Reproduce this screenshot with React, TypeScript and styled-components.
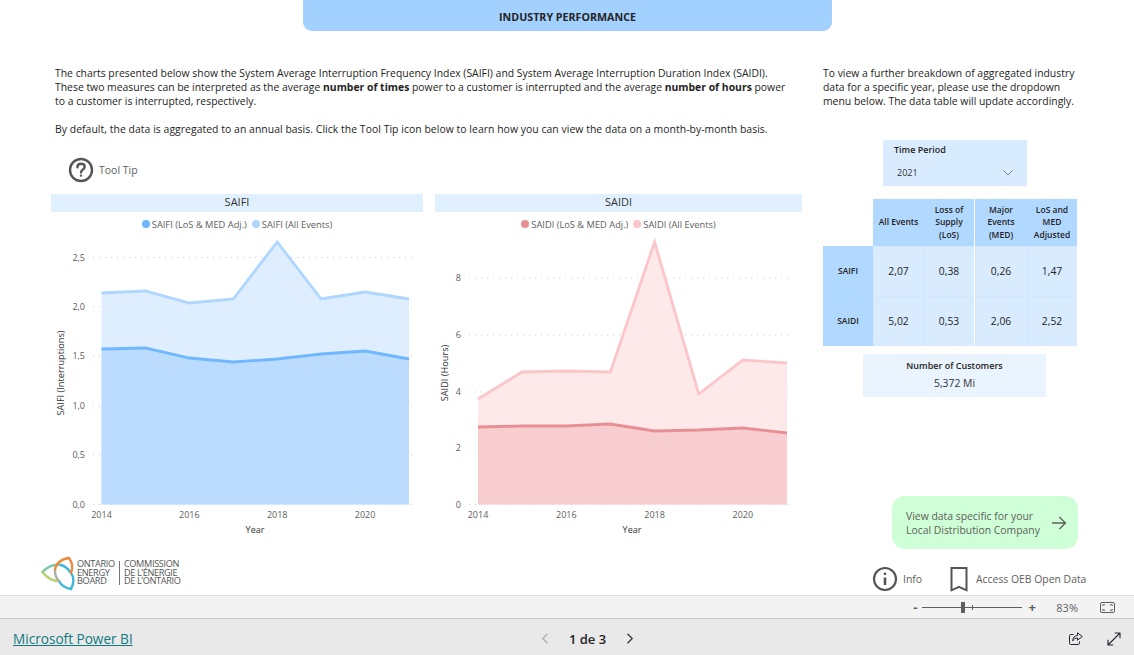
import React from 'react'
import styled, { createGlobalStyle } from 'styled-components'

const Global = createGlobalStyle`
  html, body { margin: 0; padding: 0; background: #fff; overflow: hidden; }
  body { font-family: "Open Sans", "Noto Sans", "Liberation Sans", sans-serif; color: #333; }
`

const Page = styled.div`
  width: 1134px;
  height: 655px;
  display: flex;
  flex-direction: column;
`
const Canvas = styled.div`
  height: 595px;
  flex: none;
  overflow: hidden;
`
const TitleBar = styled.div`
  width: 529px;
  height: 31px;
  margin-left: 303px;
  background: #a3d1ff;
  border-radius: 0 0 9px 9px;
  display: flex;
  align-items: center;
  justify-content: center;
  font-size: 10.7px;
  font-weight: 700;
  color: #252423;
  padding-top: 2px;
  box-sizing: border-box;
`
const Body = styled.div`
  display: grid;
  grid-template-columns: 823px 1fr;
  padding-top: 35px;
`
const LeftCol = styled.div`
  padding-left: 51px;
`
const Paragraph = styled.p<{ $track?: number }>`
  margin: 0 0 14px 4px;
  font-size: 10.4px;
  line-height: 14px;
  letter-spacing: ${p => p.$track ?? 0}px;
  white-space: nowrap;
  color: #252423;
`
const ToolTip = styled.div`
  display: flex;
  align-items: center;
  gap: 5px;
  margin: 21px 0 0 17px;
  height: 26px;
  font-size: 10.5px;
  color: #605e5c;
`
const Charts = styled.div`
  display: flex;
  gap: 12px;
  margin-top: 11px;
`
const ChartPanel = styled.div<{ $w: number }>`
  width: ${p => p.$w}px;
  flex: none;
`
const Band = styled.div`
  height: 18px;
  background: #e1f0ff;
  display: flex;
  align-items: center;
  justify-content: center;
  font-size: 11px;
  color: #333;
  padding-bottom: 4px;
  box-sizing: border-box;
`
const Legend = styled.div`
  height: 24px;
  display: flex;
  align-items: center;
  justify-content: center;
  gap: 5px;
  font-size: 9.3px;
  color: #605e5c;
`
const LegendItem = styled.span`
  display: flex;
  align-items: center;
  gap: 2px;
`
const Dot = styled.i<{ $c: string }>`
  width: 8px;
  height: 8px;
  border-radius: 50%;
  background: ${p => p.$c};
`
const ChartSvg = styled.svg`
  display: block;
  font-family: "Open Sans", "Noto Sans", sans-serif;
`
const LogoRow = styled.div`
  display: flex;
  align-items: center;
  margin: 14px 0 0 -10px;
  height: 38px;
`
const LogoText = styled.div`
  font-size: 9.2px;
  line-height: 8.7px;
  color: #555;
  letter-spacing: -0.35px;
  white-space: nowrap;
`
const LogoDivider = styled.div`
  width: 1px;
  height: 24px;
  background: #777;
  margin: 0 4px 0 4px;
`
const RightCol = styled.div`
  display: flex;
  flex-direction: column;
  align-items: flex-start;
`
const SideNote = styled.p`
  margin: 0;
  font-size: 10.4px;
  line-height: 14px;
  white-space: nowrap;
  color: #252423;
`
const Slicer = styled.div`
  width: 144px;
  height: 46px;
  margin: 32px 0 0 60px;
  background: #d9ebff;
  box-sizing: border-box;
  padding: 3px 9px 0;
`
const SlicerLabel = styled.div`
  font-size: 9px;
  font-weight: 600;
  line-height: 13px;
  padding-left: 2px;
  color: #252423;
`
const Select = styled.div`
  height: 21px;
  margin-top: 5px;
  border: 1px solid #d5e8fc;
  display: flex;
  align-items: center;
  justify-content: space-between;
  padding: 0 4px;
  font-size: 9px;
  color: #333;
`
const Table = styled.div`
  display: grid;
  grid-template-columns: 50px 51px 50px 53px 50px;
  grid-template-rows: 47px 50px 50px;
  margin-top: 13px;
  width: 254px;
`
const Corner = styled.div``
const HeadCell = styled.div<{ $sep?: boolean }>`
  background: #b1d8ff;
  display: flex;
  align-items: center;
  justify-content: center;
  text-align: center;
  font-size: 8.5px;
  line-height: 12.5px;
  font-weight: 600;
  color: #252423;
  border-left: ${p => (p.$sep ? '1px solid #fff' : 'none')};
`
const RowHead = styled(HeadCell)``
const Cell = styled.div<{ $sep?: boolean }>`
  background: #d9ebff;
  display: flex;
  align-items: center;
  justify-content: center;
  font-size: 10.3px;
  color: #252423;
  box-shadow: inset 1px 1px 0 #d3e6fb;
  border-left: ${p => (p.$sep ? '1px solid #fff' : 'none')};
`
const CustomerCard = styled.div`
  width: 183px;
  height: 43px;
  margin: 8px 0 0 40px;
  background: #e9f4ff;
  display: flex;
  flex-direction: column;
  align-items: center;
  padding-top: 5px;
  box-sizing: border-box;
`
const CardTitle = styled.div`
  font-size: 9px;
  font-weight: 600;
  line-height: 13px;
  color: #252423;
`
const CardValue = styled.div`
  font-size: 10.4px;
  line-height: 14px;
  margin-top: 4px;
  color: #333;
`
const GreenButton = styled.div`
  width: 186px;
  height: 53px;
  margin: 99px 0 0 69px;
  border-radius: 13px;
  background: #ceffd6;
  box-sizing: border-box;
  padding: 0 11px 0 14px;
  display: flex;
  align-items: center;
  justify-content: space-between;
  font-size: 10.4px;
  line-height: 14px;
  color: #605e5c;
  white-space: nowrap;
`
const Links = styled.div`
  display: flex;
  align-items: center;
  margin: 17px 0 0 49px;
  height: 26px;
  font-size: 10.4px;
  color: #605e5c;
`
const LinkItem = styled.div<{ $gap: number; $after?: number }>`
  display: flex;
  align-items: center;
  gap: ${p => p.$gap}px;
  margin-right: ${p => p.$after ?? 0}px;
`
const ZoomBar = styled.div`
  height: 24px;
  flex: none;
  background: #f3f3f3;
  border-top: 1px solid #dedede;
  border-bottom: 1px solid #c8c8c8;
  box-sizing: border-box;
  display: flex;
  align-items: center;
  justify-content: flex-end;
  padding-right: 19px;
  font-size: 11px;
  color: #605e5c;
`
const ZoomSign = styled.span<{ $w: number }>`
  width: ${p => p.$w}px;
  text-align: center;
  font-size: 13px;
  font-weight: 700;
  line-height: 16px;
`
const Track = styled.div`
  position: relative;
  width: 100px;
  height: 1px;
  margin: 0 4px 0 2px;
  background: #605e5c;
`
const Thumb = styled.div`
  position: absolute;
  left: 39px;
  top: -5px;
  width: 4px;
  height: 11px;
  background: #605e5c;
`
const TrackTick = styled.div`
  position: absolute;
  left: 50px;
  top: -2px;
  width: 1px;
  height: 5px;
  background: #605e5c;
`
const ZoomValue = styled.span`
  margin: 0 22px 0 18px;
  font-size: 11px;
`
const Footer = styled.div`
  flex: 1;
  background: #e9e9e9;
  display: grid;
  grid-template-columns: 1fr 1fr 1fr;
  align-items: center;
  padding: 3px 13px 0;
`
const BrandLink = styled.a`
  font-size: 13.6px;
  font-weight: 500;
  color: #117a80;
  text-decoration: underline;
  white-space: nowrap;
`
const Pager = styled.div`
  display: flex;
  align-items: center;
  justify-content: center;
  gap: 20px;
  padding-left: 41px;
  font-size: 13px;
  font-weight: 600;
  color: #252423;
`
const FooterIcons = styled.div`
  display: flex;
  justify-content: flex-end;
  gap: 24px;
  align-items: center;
`

type ChartProps = {
  width: number
  originX: number
  x0: number
  x1: number
  gridFrom: number
  gridTo: number
  ticks: { label: string; y: number }[]
  all: number[]
  adj: number[]
  fillAll: string
  fillAdj: string
  lineAll: string
  lineAdj: string
  axisTitle: string
  titleX: number
  yearX: number
}

const TOP = 236
const BASE = 504.5

function AreaChart(p: ChartProps) {
  const step = (p.x1 - p.x0) / 7
  const xs = p.all.map((_, i) => p.x0 - p.originX + step * i)
  const base = BASE - TOP
  const pts = (vals: number[]) => vals.map((v, i) => `${xs[i].toFixed(1)},${v - TOP}`).join(' ')
  const area = (vals: number[]) => `${xs[0].toFixed(1)},${base} ${pts(vals)} ${xs[7].toFixed(1)},${base}`
  return (
    <ChartSvg width={p.width} height={304} viewBox={`0 0 ${p.width} 304`}>
      {p.ticks.map(t => (
        <g key={t.label}>
          <line x1={p.gridFrom - p.originX} x2={p.gridTo - p.originX} y1={t.y - TOP} y2={t.y - TOP} stroke="#ccc" strokeDasharray="1 5" />
          <text x={p.gridFrom - p.originX - 8} y={t.y - TOP + 3} textAnchor="end" fontSize="9" fill="#605e5c">{t.label}</text>
        </g>
      ))}
      <polygon points={area(p.all)} fill={p.fillAll} />
      <polygon points={area(p.adj)} fill={p.fillAdj} />
      <polyline points={pts(p.all)} fill="none" stroke={p.lineAll} strokeWidth="2.8" />
      <polyline points={pts(p.adj)} fill="none" stroke={p.lineAdj} strokeWidth="2.8" />
      {[0, 2, 4, 6].map(i => (
        <text key={i} x={xs[i]} y={282} textAnchor="middle" fontSize="9" fill="#605e5c">{2014 + i}</text>
      ))}
      <text x={p.yearX - p.originX} y={297} textAnchor="middle" fontSize="9" fill="#333">Year</text>
      <text
        transform={`translate(${p.titleX - p.originX} ${373 - TOP}) rotate(-90)`}
        textAnchor="middle"
        fontSize="9.2"
        fill="#333"
      >
        {p.axisTitle}
      </text>
    </ChartSvg>
  )
}

const HelpIcon = () => (
  <svg width="26" height="26" viewBox="0 0 26 26" fill="none" stroke="#555" strokeWidth="2.4">
    <circle cx="13" cy="13" r="11" />
    <path d="M9.4 10.2c0-2.2 1.6-3.4 3.7-3.4 2.1 0 3.6 1.2 3.6 3 0 2.8-3.7 2.8-3.7 5.6" strokeLinecap="round" />
    <circle cx="13" cy="18.6" r="0.6" fill="#555" strokeWidth="1.2" />
  </svg>
)

const InfoIcon = () => (
  <svg width="26" height="26" viewBox="0 0 26 26" fill="none" stroke="#555" strokeWidth="2.2">
    <circle cx="13" cy="13" r="11" />
    <path d="M13 11.5v7.5" strokeWidth="2.6" />
    <circle cx="13" cy="7.8" r="0.7" fill="#555" strokeWidth="1.4" />
  </svg>
)

const BookmarkIcon = () => (
  <svg width="18" height="25" viewBox="0 0 18 25" fill="none" stroke="#555" strokeWidth="2">
    <path d="M1.5 1h15v22.3L9 19.8 1.5 23.3z" />
  </svg>
)

const ArrowIcon = () => (
  <svg width="16" height="14" viewBox="0 0 16 14" fill="none" stroke="#605e5c" strokeWidth="1.3">
    <path d="M1 7h13.5M8.4 1l6.1 6-6.1 6" />
  </svg>
)

const ChevronDown = () => (
  <svg width="10" height="6" viewBox="0 0 10 6" fill="none" stroke="#777" strokeWidth="0.9">
    <path d="M0.5 0.5L5 5l4.5-4.5" />
  </svg>
)

const PagerChevron = ({ left, color }: { left?: boolean; color: string }) => (
  <svg width="8" height="11" viewBox="0 0 8 11" fill="none" stroke={color} strokeWidth="1.3">
    <path d={left ? 'M6.5 0.8L1.8 5.5l4.7 4.7' : 'M1.5 0.8l4.7 4.7-4.7 4.7'} />
  </svg>
)

const FitIcon = () => (
  <svg width="15" height="11" viewBox="0 0 15 11" fill="none" stroke="#605e5c" strokeWidth="1">
    <rect x="0.5" y="0.5" width="14" height="10" rx="1.5" />
    <path d="M2.8 4V2.8H5M10 2.8h2.2V4M2.8 7v1.2H5M10 8.2h2.2V7" />
  </svg>
)

const ShareIcon = () => (
  <svg width="14" height="13" viewBox="0 0 14 13" fill="none" stroke="#2b2233" strokeWidth="1">
    <path d="M4.5 2.5H1.7C1 2.5.5 3 .5 3.7v7.6c0 .7.5 1.2 1.2 1.2h7.6c.7 0 1.2-.5 1.2-1.2V9.5" />
    <path d="M8.5.8l4.8 3.7-4.8 3.7V6c-2.2 0-3.8.9-4.8 3 0-3.4 1.8-5.3 4.8-5.500z" />
  </svg>
)

const ExpandIcon = () => (
  <svg width="14" height="14" viewBox="0 0 14 14" fill="none" stroke="#2b2233" strokeWidth="1.1">
    <path d="M1 13L13 1M7.8 1H13v5.2M1 7.8V13h5.2" />
  </svg>
)

const OebLogo = () => (
  <svg width="36" height="38" viewBox="0 0 36 38" fill="none" strokeWidth="2.4" strokeLinecap="round">
    <path d="M1.5 18C7 12 14 10 20 11" stroke="#7fc8b0" />
    <path d="M1.5 18C6 24 12 27 18 27" stroke="#b5d36b" />
    <path d="M30 35C24 34 20 31 18 27" stroke="#3fb6e0" />
    <path d="M30 35C33 29 33 23 30 19 28 16 24 12 20 11" stroke="#3fb6e0" />
    <path d="M28 4C20 5 14 10 14 17" stroke="#ea8a3e" />
    <path d="M28 4C31 8 32 14 30 19" stroke="#ea8a3e" />
    <path d="M14 17C14 20 15 24 18 27" stroke="#a9aea6" />
  </svg>
)

const years = {
  saifiAll: [293, 291, 303, 299, 242, 299, 292, 299],
  saifiAdj: [349, 348, 358, 362, 359, 354, 351, 359],
  saidiAll: [399, 372, 371, 372, 242, 394, 360, 363],
  saidiAdj: [427, 426, 426, 424, 431, 430, 428, 433],
}

const rows = [
  { name: 'SAIFI', vals: ['2,07', '0,38', '0,26', '1,47'] },
  { name: 'SAIDI', vals: ['5,02', '0,53', '2,06', '2,52'] },
]

export default function App() {
  return (
    <Page>
      <Global />
      <Canvas>
        <TitleBar>INDUSTRY PERFORMANCE</TitleBar>
        <Body>
          <LeftCol>
            <Paragraph>
              The charts presented below show the System Average Interruption Frequency Index (SAIFI) and System Average Interruption Duration Index (SAIDI).
              <br />
              These two measures can be interpreted as the average <b>number of times</b> power to a customer is interrupted and the average <b>number of hours</b> power
              <br />
              to a customer is interrupted, respectively.
            </Paragraph>
            <Paragraph $track={0.05}>
              By default, the data is aggregated to an annual basis. Click the Tool Tip icon below to learn how you can view the data on a month-by-month basis.
            </Paragraph>
            <ToolTip>
              <HelpIcon />
              Tool Tip
            </ToolTip>
            <Charts>
              <ChartPanel $w={372}>
                <Band>SAIFI</Band>
                <Legend>
                  <LegendItem><Dot $c="#6fb8ff" />SAIFI (LoS &amp; MED Adj.)</LegendItem>
                  <LegendItem><Dot $c="#aed6ff" />SAIFI (All Events)</LegendItem>
                </Legend>
                <AreaChart
                  width={372}
                  originX={51}
                  x0={101.5}
                  x1={409}
                  gridFrom={93}
                  gridTo={416}
                  ticks={[
                    { label: '2,5', y: 257.5 },
                    { label: '2,0', y: 307 },
                    { label: '1,5', y: 356 },
                    { label: '1,0', y: 406 },
                    { label: '0,5', y: 455 },
                    { label: '0,0', y: 504.5 },
                  ]}
                  all={years.saifiAll}
                  adj={years.saifiAdj}
                  fillAll="#deeeff"
                  fillAdj="#bbdcff"
                  lineAll="#aed6ff"
                  lineAdj="#6fb8ff"
                  axisTitle="SAIFI (Interruptions)"
                  titleX={64}
                  yearX={255}
                />
              </ChartPanel>
              <ChartPanel $w={367}>
                <Band>SAIDI</Band>
                <Legend>
                  <LegendItem><Dot $c="#e88f96" />SAIDI (LoS &amp; MED Adj.)</LegendItem>
                  <LegendItem><Dot $c="#fcc5c9" />SAIDI (All Events)</LegendItem>
                </Legend>
                <AreaChart
                  width={367}
                  originX={435}
                  x0={478}
                  x1={787}
                  gridFrom={469}
                  gridTo={793}
                  ticks={[
                    { label: '8', y: 278 },
                    { label: '6', y: 335 },
                    { label: '4', y: 392 },
                    { label: '2', y: 448 },
                    { label: '0', y: 504.5 },
                  ]}
                  all={years.saidiAll}
                  adj={years.saidiAdj}
                  fillAll="#fde8ea"
                  fillAdj="#f7cdd0"
                  lineAll="#fcc5c9"
                  lineAdj="#e88f96"
                  axisTitle="SAIDI (Hours)"
                  titleX={448}
                  yearX={632}
                />
              </ChartPanel>
            </Charts>
            <LogoRow>
              <OebLogo />
              <LogoText>ONTARIO<br />ENERGY<br />BOARD</LogoText>
              <LogoDivider />
              <LogoText>COMMISSION<br />DE L’ÉNERGIE<br />DE L’ONTARIO</LogoText>
            </LogoRow>
          </LeftCol>
          <RightCol>
            <SideNote>
              To view a further breakdown of aggregated industry
              <br />
              data for a specific year, please use the dropdown
              <br />
              menu below. The data table will update accordingly.
            </SideNote>
            <Slicer>
              <SlicerLabel>Time Period</SlicerLabel>
              <Select>
                2021
                <ChevronDown />
              </Select>
            </Slicer>
            <Table>
              <Corner />
              <HeadCell>All Events</HeadCell>
              <HeadCell>Loss of<br />Supply<br />(LoS)</HeadCell>
              <HeadCell $sep>Major<br />Events<br />(MED)</HeadCell>
              <HeadCell>LoS and<br />MED<br />Adjusted</HeadCell>
              {rows.map(r => (
                <React.Fragment key={r.name}>
                  <RowHead>{r.name}</RowHead>
                  {r.vals.map((v, i) => (
                    <Cell key={i} $sep={i === 2}>{v}</Cell>
                  ))}
                </React.Fragment>
              ))}
            </Table>
            <CustomerCard>
              <CardTitle>Number of Customers</CardTitle>
              <CardValue>5,372 Mi</CardValue>
            </CustomerCard>
            <GreenButton>
              <span>View data specific for your<br />Local Distribution Company</span>
              <ArrowIcon />
            </GreenButton>
            <Links>
              <LinkItem $gap={5} $after={28}><InfoIcon />Info</LinkItem>
              <LinkItem $gap={8}><BookmarkIcon />Access OEB Open Data</LinkItem>
            </Links>
          </RightCol>
        </Body>
      </Canvas>
      <ZoomBar>
        <ZoomSign $w={10}>-</ZoomSign>
        <Track>
          <Thumb />
          <TrackTick />
        </Track>
        <ZoomSign $w={12}>+</ZoomSign>
        <ZoomValue>83%</ZoomValue>
        <FitIcon />
      </ZoomBar>
      <Footer>
        <BrandLink>Microsoft Power BI</BrandLink>
        <Pager>
          <PagerChevron left color="#b3b0ad" />
          <span>1 de 3</span>
          <PagerChevron color="#3b3a39" />
        </Pager>
        <FooterIcons>
          <ShareIcon />
          <ExpandIcon />
        </FooterIcons>
      </Footer>
    </Page>
  )
}
